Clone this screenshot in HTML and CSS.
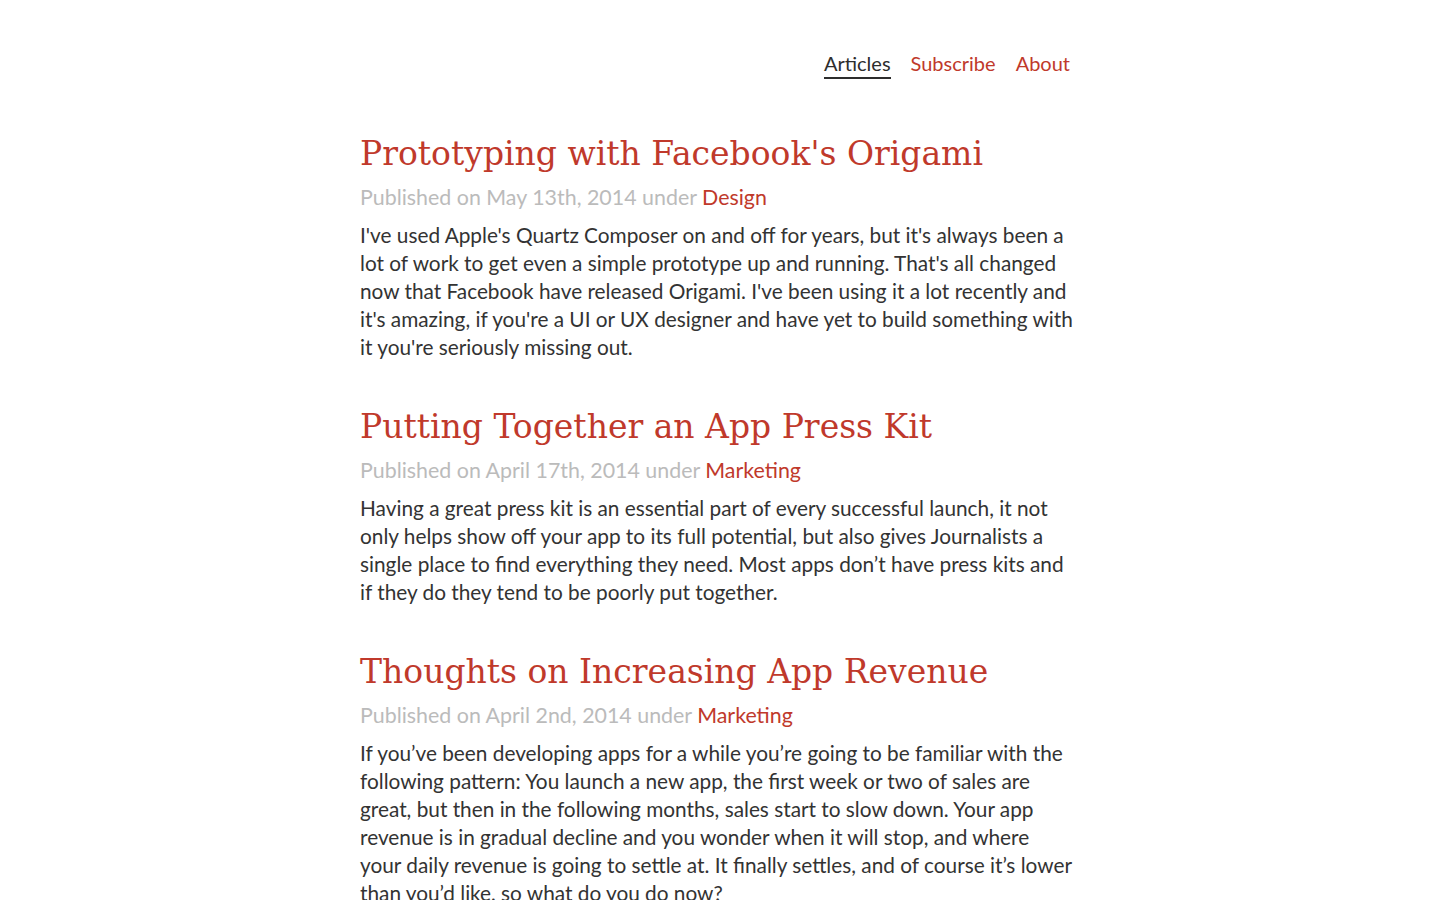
FILE: index.html
```html
<!DOCTYPE html>
<html lang="en">
<head>
<meta charset="utf-8">
<title>Articles</title>
<link rel="stylesheet" href="styles.css">
</head>
<body>
<div class="page">
  <header class="site-header">
    <nav class="nav">
      <a class="nav-link active" href="#">Articles</a>
      <a class="nav-link" href="#">Subscribe</a>
      <a class="nav-link" href="#">About</a>
    </nav>
  </header>
  <main class="articles">
    <article class="post">
      <h2 class="post-title"><a href="#">Prototyping with Facebook's Origami</a></h2>
      <p class="post-meta">Published on May 13th, 2014 under <a href="#">Design</a></p>
      <p class="post-excerpt">I've used Apple's Quartz Composer on and off for years, but it's always been a lot of work to get even a simple prototype up and running. That's all changed now that Facebook have released Origami. I've been using it a lot recently and it's amazing, if you're a UI or UX designer and have yet to build something with it you're seriously missing out.</p>
    </article>
    <article class="post">
      <h2 class="post-title"><a href="#">Putting Together an App Press Kit</a></h2>
      <p class="post-meta">Published on April 17th, 2014 under <a href="#">Marketing</a></p>
      <p class="post-excerpt">Having a great press kit is an essential part of every successful launch, it not only helps show off your app to its full potential, but also gives Journalists a single place to find everything they need. Most apps don’t have press kits and if they do they tend to be poorly put together.</p>
    </article>
    <article class="post">
      <h2 class="post-title"><a href="#">Thoughts on Increasing App Revenue</a></h2>
      <p class="post-meta">Published on April 2nd, 2014 under <a href="#">Marketing</a></p>
      <p class="post-excerpt">If you’ve been developing apps for a while you’re going to be familiar with the following pattern: You launch a new app, the first week or two of sales are great, but then in the following months, sales start to slow down. Your app revenue is in gradual decline and you wonder when it will stop, and where your daily revenue is going to settle at. It finally settles, and of course it’s lower than you’d like, so what do you do now?</p>
    </article>
  </main>
</div>
</body>
</html>
```
FILE: styles.css
```css
html, body {
  margin: 0;
  padding: 0;
  background: #ffffff;
}
body {
  font-family: Lato, "Open Sans", sans-serif;
  color: #333333;
}
a {
  color: #c0392b;
  text-decoration: none;
}
.page {
  width: 720px;
  margin: 0 auto;
}
.site-header {
  display: flex;
  justify-content: flex-end;
  padding: 50px 10px 0 0;
}
.nav {
  display: flex;
  gap: 20px;
}
.nav-link {
  font-size: 20px;
  line-height: 27px;
  border-bottom: 2px solid transparent;
}
.nav-link.active {
  color: #2d2d2d;
  border-bottom-color: #2d2d2d;
}
.articles {
  padding-top: 52px;
}
.post {
  margin-bottom: 43px;
}
.post-title {
  font-family: "DejaVu Serif", serif;
  font-weight: normal;
  font-size: 33px;
  line-height: 44px;
  margin: 0;
  padding-top: 1px;
}
.post-meta {
  font-size: 21.4px;
  line-height: 28px;
  color: #bbbbbb;
  margin: 7px 0 10px;
}
.post-excerpt {
  font-size: 20.8px;
  line-height: 28px;
  margin: 0;
  max-width: 714px;
}
```
